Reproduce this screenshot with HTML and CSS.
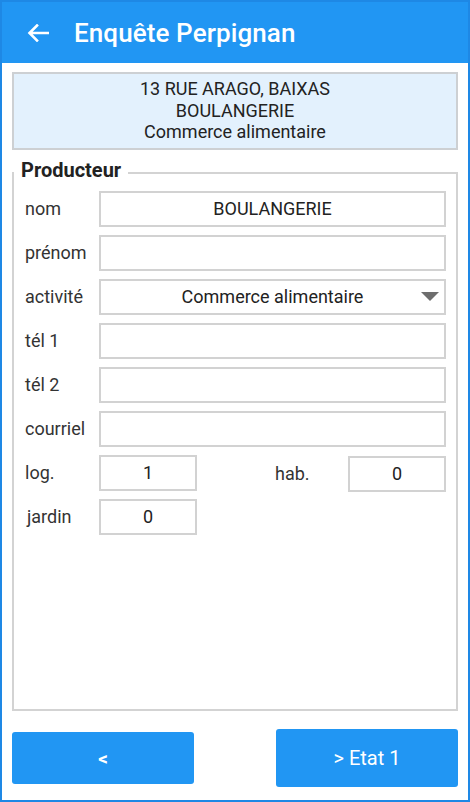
FILE: index.html
```html
<!DOCTYPE html>
<html lang="fr">
<head>
<meta charset="utf-8">
<title>Enquête Perpignan</title>
<link rel="stylesheet" href="styles.css">
</head>
<body>
<div class="screen">
  <header class="appbar">
    <svg class="back" width="22" height="18" viewBox="0 0 22 18" aria-hidden="true">
      <path d="M21 9H3M10 1.5L2.5 9L10 16.5" fill="none" stroke="#fff" stroke-width="2.6" stroke-linecap="square" stroke-linejoin="miter"/>
    </svg>
    <h1 class="title">Enquête Perpignan</h1>
  </header>

  <div class="info">
    <div>13 RUE ARAGO, BAIXAS</div>
    <div>BOULANGERIE</div>
    <div>Commerce alimentaire</div>
  </div>

  <fieldset class="producer">
    <legend>Producteur</legend>
    <div class="rows">
      <div class="row"><span class="label">nom</span><div class="field">BOULANGERIE</div></div>
      <div class="row"><span class="label">prénom</span><div class="field"></div></div>
      <div class="row"><span class="label">activité</span>
        <div class="field select">
          <span class="select-text">Commerce alimentaire</span>
          <svg class="caret" width="18" height="9" viewBox="0 0 18 9" aria-hidden="true"><path d="M0 0H18L9 9Z" fill="#6e6e6e"/></svg>
        </div>
      </div>
      <div class="row"><span class="label">tél 1</span><div class="field"></div></div>
      <div class="row"><span class="label">tél 2</span><div class="field"></div></div>
      <div class="row"><span class="label">courriel</span><div class="field"></div></div>
      <div class="row split">
        <div class="pair"><span class="label">log.</span><div class="field small">1</div></div>
        <div class="pair low"><span class="label narrow">hab.</span><div class="field small">0</div></div>
      </div>
      <div class="row"><span class="label indent">jardin</span><div class="field small">0</div></div>
    </div>
  </fieldset>

  <div class="actions">
    <button class="btn prev">&lt;</button>
    <button class="btn next">&gt; Etat 1</button>
  </div>
</div>
</body>
</html>
```

FILE: styles.css
```css
* { box-sizing: border-box; }

html, body {
  margin: 0;
  padding: 0;
  background: #ffffff;
}

body {
  font-family: Roboto, "Liberation Sans", Arial, sans-serif;
  color: #222222;
}

.screen {
  width: 470px;
  height: 802px;
  border: 2px solid #1e88e5;
  display: flex;
  flex-direction: column;
  background: #ffffff;
}

.appbar {
  height: 61px;
  flex: none;
  background: #2196f3;
  display: flex;
  align-items: center;
  padding-left: 25px;
  gap: 25px;
}

.back {
  display: block;
  flex: none;
}

.title {
  margin: 0;
  color: #ffffff;
  font-size: 26px;
  font-weight: 500;
  letter-spacing: 0.1px;
}

.info {
  margin: 9px 10px 0;
  background: #e3f1fd;
  border: 2px solid #cdd0d3;
  padding: 4px 0 5px;
  text-align: center;
  font-size: 18px;
  line-height: 21.5px;
  color: #222222;
}

.producer {
  flex: 1;
  margin: 8px 10px 0;
  padding: 0;
  border: 2px solid #d3d3d3;
  min-width: 0;
}

.producer legend {
  margin-left: 0;
  padding: 0 7px 7px;
  font-size: 20px;
  font-weight: 700;
  color: #222222;
}

.rows {
  display: flex;
  flex-direction: column;
  gap: 8px;
  padding: 2px 10px 0 11px;
}

.row {
  display: flex;
  align-items: center;
  height: 36px;
}

.label {
  width: 74px;
  flex: none;
  font-size: 18px;
  color: #333333;
}

.label.narrow { width: 73px; }
.label.indent { padding-left: 2px; }

.field {
  flex: 1;
  height: 36px;
  border: 2px solid #d2d2d2;
  background: #ffffff;
  font-size: 18px;
  color: #222222;
  display: flex;
  align-items: center;
  justify-content: center;
}

.field.small {
  flex: none;
  width: 98px;
}

.field.select {
  display: grid;
  grid-template-columns: 1fr;
  justify-content: stretch;
  align-items: center;
}

.select-text,
.caret {
  grid-area: 1 / 1;
}

.select-text {
  justify-self: center;
}

.caret {
  justify-self: end;
  margin-right: 5px;
  display: block;
}

.row.split {
  justify-content: space-between;
}

.pair {
  display: flex;
  align-items: center;
}

.pair.low {
  margin-top: 2px;
}

.actions {
  flex: none;
  height: 58px;
  margin: 18px 10px 13px;
  display: flex;
  align-items: center;
  justify-content: space-between;
}

.btn {
  border: none;
  border-radius: 3px;
  background: #2196f3;
  color: #ffffff;
  font-family: Roboto, "Liberation Sans", Arial, sans-serif;
  width: 182px;
  padding: 0;
  cursor: pointer;
}

.btn.prev {
  height: 52px;
  font-size: 19px;
  font-weight: 700;
}

.btn.next {
  height: 58px;
  font-size: 20px;
}
```
